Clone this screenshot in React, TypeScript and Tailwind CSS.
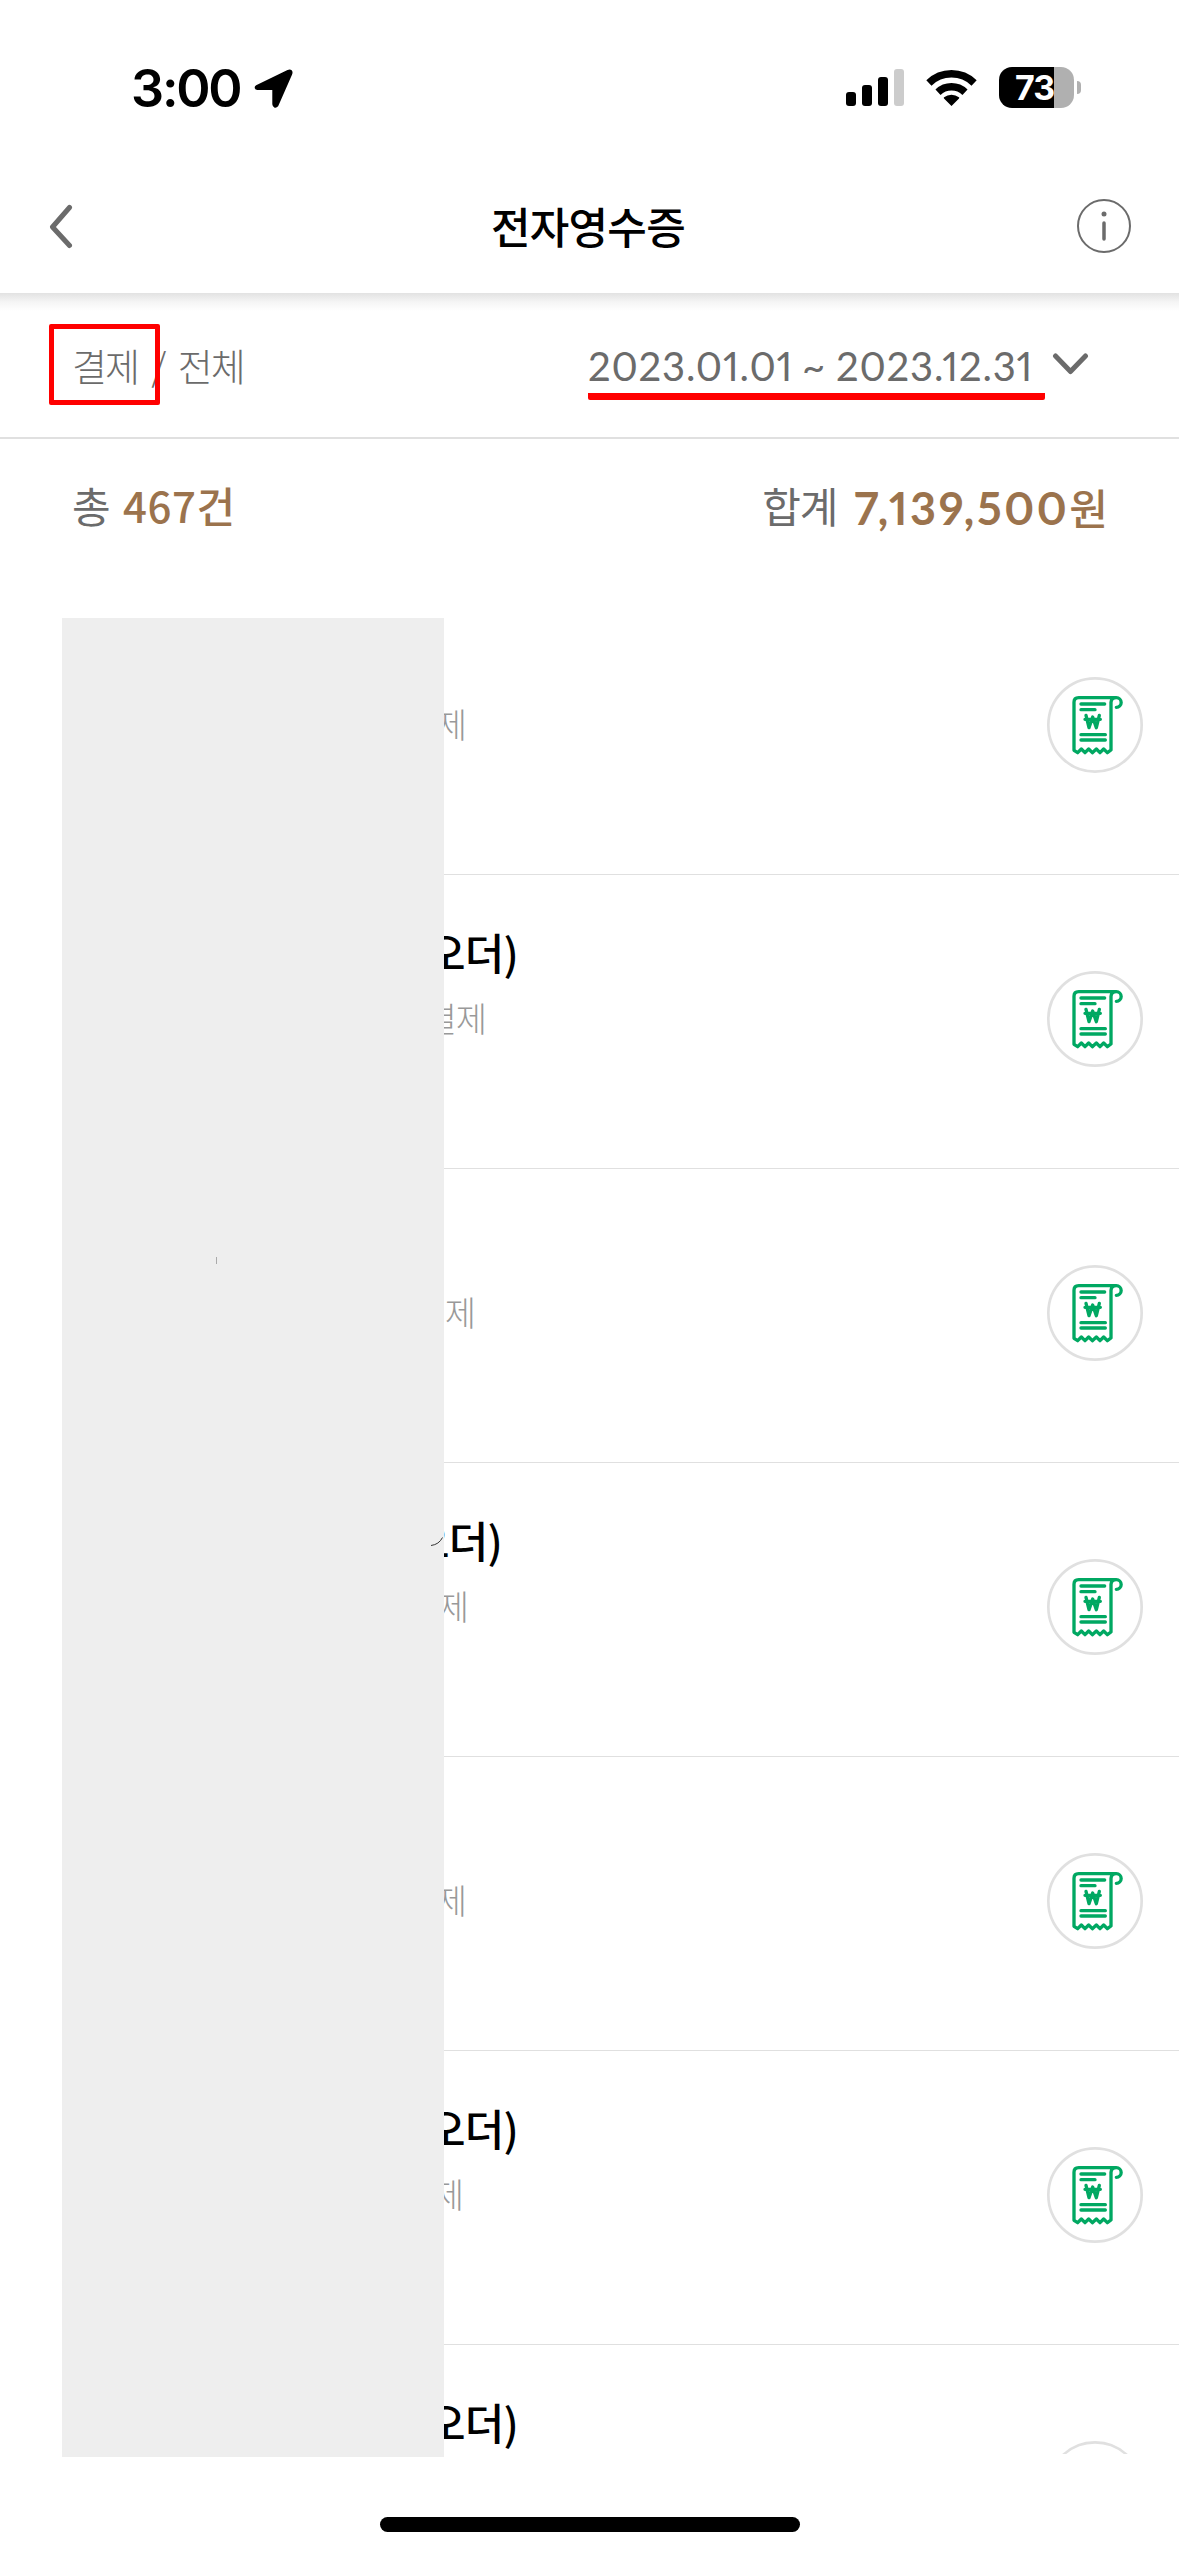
import { clsx } from "clsx";

const receipts = [
  { title: "", method: "결제", titleEnd: "w-[456px]", methodEnd: "w-[404px]" },
  { title: "오더)", method: "결제", titleEnd: "w-[456px]", methodEnd: "w-[424px]" },
  { title: "", method: "결제", titleEnd: "w-[456px]", methodEnd: "w-[413px]" },
  { title: "오더)", method: "결제", titleEnd: "w-[440px]", methodEnd: "w-[406px]" },
  { title: "", method: "결제", titleEnd: "w-[456px]", methodEnd: "w-[404px]" },
  { title: "오더)", method: "결제", titleEnd: "w-[456px]", methodEnd: "w-[401px]" },
  { title: "오더)", method: "", titleEnd: "w-[456px]", methodEnd: "w-[401px]" },
];

function StatusBar() {
  return (
    <div className="flex h-[176px] shrink-0 items-start justify-between pt-[67px] pr-[98px] pl-[131px]">
      <div className="flex items-start">
        <span className="w-[123px] pt-px font-[Inter] text-[52px] leading-[42px] font-semibold tracking-[-2.2px]">
          3:00
        </span>
        <svg className="mt-[2px] h-[39px] w-[39px]" viewBox="0 0 39 39">
          <path
            d="M3.2 18.4 34.6 3.2Q36.6 2.4 35.8 4.4L22.2 35.6Q21 37 20.8 35V19.4Q20.8 18.6 20 18.6Z"
            stroke="black"
            strokeWidth="5"
            strokeLinejoin="round"
          />
        </svg>
      </div>
      <div className="flex items-start">
        <svg className="mt-[2px] h-[37px] w-[58px]" viewBox="0 0 58 37">
          <rect x="0" y="23" width="10" height="14" rx="3" />
          <rect x="16" y="16" width="10" height="21" rx="3" />
          <rect x="32" y="8" width="10" height="29" rx="3" />
          <rect x="48" y="0" width="10" height="37" rx="3" fill="#cccccc" />
        </svg>
        <svg className="mt-[2px] ml-[22px] h-[37px] w-[51px]" viewBox="0 0 51 37">
          <path d="M25.5 37 18 29.6a.9.9 0 0 1 .1-1.3 11.6 11.6 0 0 1 14.8 0 .9.9 0 0 1 .1 1.3Z" />
          <path d="M12 23.2a19.6 19.6 0 0 1 27 0" fill="none" stroke="black" strokeWidth="7.4" />
          <path d="M2.9 14a32.4 32.4 0 0 1 45.2 0" fill="none" stroke="black" strokeWidth="7.4" />
        </svg>
        <div className="ml-[22px] flex items-center">
          <div className="flex h-[41px] w-[75px] items-center justify-center overflow-hidden rounded-[13px] bg-[linear-gradient(to_right,black_55px,#b0b0b0_55px)] pr-[4px]">
            <span className="font-[Inter] text-[34px] leading-none font-bold tracking-[-1px] text-white">
              73
            </span>
          </div>
          <span className="ml-[3px] h-[13px] w-[4px] rounded-r-full bg-[#b0b0b0]" />
        </div>
      </div>
    </div>
  );
}

function ReceiptIcon() {
  return (
    <svg
      className="h-[96px] w-[96px]"
      viewBox="0 0 288 288"
      fill="none"
      stroke="#00a862"
      strokeWidth="10"
      strokeLinecap="round"
      strokeLinejoin="round"
    >
      <circle cx="144" cy="144" r="140" fill="white" stroke="#e0e0e0" strokeWidth="8" />
      <path d="M208 62H95Q81 62 81 76V220L92 227 103 216 114 227 125 216 136 227 148 216 159 227 170 216 181 227 192 219V76Q193 62 208 62A14.500 14.500 0 1 1 208 91" />
      <path d="M102 81H173M102 98H144M102 173H175M102 189H175" />
      <path d="M117 115 126 152 137 120 148 152 157 115M114 127H160" />
    </svg>
  );
}

export default function App() {
  return (
    <div className="relative flex h-[2556px] w-[1179px] flex-col overflow-hidden bg-white font-['Noto_Sans_CJK_KR',sans-serif] text-black">
      <StatusBar />

      <header className="flex h-[117px] shrink-0 items-start justify-between pt-[23px] pr-[48px] pl-[49px]">
        <svg className="mt-[5px] h-[46px] w-[50px]" viewBox="0 0 50 46">
          <path d="M20.500 3.500 3.500 23 20.500 41.500" fill="none" stroke="#6b6b6b" strokeWidth="5" strokeLinecap="round" strokeLinejoin="round" />
        </svg>
        <h1 className="text-[43px] leading-[52px] font-medium tracking-[-0.8px]">전자영수증</h1>
        <svg className="h-[54px] w-[54px]" viewBox="0 0 54 54">
          <circle cx="27" cy="27" r="26" fill="none" stroke="#6b6b6b" strokeWidth="2" />
          <circle cx="27" cy="15" r="2.500" fill="#6b6b6b" />
          <path d="M27 24V40" stroke="#6b6b6b" strokeWidth="3.500" strokeLinecap="round" />
        </svg>
      </header>

      <div className="flex h-[146px] shrink-0 items-start justify-between border-b-2 border-[#e0e0e0] bg-[linear-gradient(#e2e2e2,#f5f5f5_9px,white_18px)] pt-[31px] pr-[90px] pl-[49px] text-[#6b6b6b]">
        <div className="relative h-[81px] w-[220px] pl-[23px]">
          <span className="text-[38px] leading-[81px] font-light tracking-[-2px] whitespace-pre [word-spacing:7px]">결제 / 전체</span>
          <span className="absolute top-0 left-0 h-[81px] w-[111px] rounded-[2px] border-[5px] border-[#ff0000]" />
        </div>
        <div className="flex items-start">
          <div className="w-[457px] rounded-[2px] border-b-[7px] border-[#ff0000]">
            <p className="flex h-[69px] font-[Lato] text-[40px] leading-[85px] tracking-[0.8px] whitespace-nowrap proportional-nums">
              <span className="w-[214px]">2023.01.01</span>
              <span className="w-[34px]">~</span>
              <span>2023.12.31</span>
            </p>
          </div>
          <svg className="mt-[28px] ml-[7px] h-[24px] w-[37px]" viewBox="0 0 37 24">
            <path d="M3.500 4 18.500 19.500 33.500 4" fill="none" stroke="#6b6b6b" strokeWidth="5" strokeLinecap="round" strokeLinejoin="round" />
          </svg>
        </div>
      </div>

      <div className="flex h-[142px] shrink-0 items-start justify-between pt-[36px] pr-[72px] pl-[72px] text-[42px] leading-[60px] text-[#6b6b6b]">
        <p className="flex">
          <span className="w-[51px]">총</span>
          <span className="font-medium tracking-[0.6px] text-[#9b734d]">467건</span>
        </p>
        <p className="flex tracking-[-1px]">
          <span className="w-[92px]">합계</span>
          <span className="pt-[3px] font-[Lato] text-[45px] font-bold tracking-[2.6px] text-[#9b734d] proportional-nums">
            7,139,500
          </span>
          <span className="pt-[2px] font-medium text-[#9b734d]">원</span>
        </p>
      </div>

      <ul className="ml-[62px] h-[1873px] overflow-hidden">
        {receipts.map((receipt, i) => (
          <li key={i} className="flex h-[294px] items-start justify-between border-b border-[#e0e0e0] pr-[36px]">
            <div className="pt-[46px] text-right">
              <p className={clsx("h-[60px] text-[43px] leading-[60px] font-medium tracking-[-0.8px]", receipt.titleEnd)}>
                {receipt.title}
              </p>
              <p className={clsx("mt-[7px] text-[34px] leading-[60px] font-light tracking-[-1px] text-[#999999]", receipt.methodEnd)}>
                {receipt.method}
              </p>
            </div>
            <div className="pt-[96px]">
              <ReceiptIcon />
            </div>
          </li>
        ))}
      </ul>

      {/* privacy cover over store names */}
      <div className="absolute top-[618px] left-[62px] h-[1839px] w-[382px] bg-[#eeeeee]">
        <span className="absolute top-[639px] left-[154px] h-[7px] w-px bg-[#aaaaaa]" />
        <svg className="absolute top-[918px] left-[369px] h-[11px] w-[13px]" viewBox="0 0 13 11">
          <path d="M0 9.500Q8 8.500 11.500 1.500" fill="none" stroke="#333333" strokeWidth="1" />
        </svg>
      </div>

      <div className="absolute bottom-[24px] left-[380px] h-[15px] w-[420px] rounded-full bg-black" />
    </div>
  );
}
